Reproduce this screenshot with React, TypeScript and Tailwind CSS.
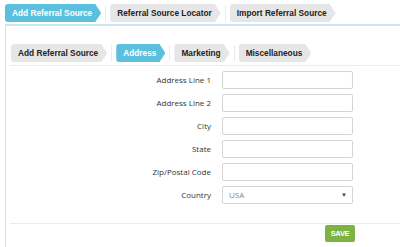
import React from "react";

type Tab = { label: string; active?: boolean };

const topTabs: Tab[] = [
  { label: "Add Referral Source", active: true },
  { label: "Referral Source Locator" },
  { label: "Import Referral Source" },
];

const subTabs: Tab[] = [
  { label: "Add Referral Source" },
  { label: "Address", active: true },
  { label: "Marketing" },
  { label: "Miscellaneous" },
];

const fields = ["Address Line 1", "Address Line 2", "City", "State", "Zip/Postal Code"];

function ArrowTab({ tab }: { tab: Tab }) {
  return (
    <div
      className={
        "h-[18px] flex items-center pl-[7px] pr-[9px] rounded-l-[3px] text-[8.3px] font-bold whitespace-nowrap [clip-path:polygon(0_0,calc(100%-6px)_0,100%_50%,calc(100%-6px)_100%,0_100%)] " +
        (tab.active ? "bg-[#5bc0de] text-white" : "bg-[#e6e6e6] text-[#222]")
      }
      style={{ fontFamily: '"Liberation Sans", Arial, sans-serif' }}
    >
      {tab.label}
    </div>
  );
}

function TabRow({ tabs }: { tabs: Tab[] }) {
  return (
    <div className="flex items-center">
      {tabs.map((t, i) => (
        <React.Fragment key={t.label}>
          {i > 0 && <div className="w-[1px] h-[16px] mx-[4px] bg-[#ececec]" />}
          <ArrowTab tab={t} />
        </React.Fragment>
      ))}
    </div>
  );
}

export default function App() {
  return (
    <div
      className="w-[400px] h-[247px] bg-white overflow-hidden flex flex-col"
      style={{ fontFamily: '"Open Sans", sans-serif' }}
    >
      <div className="pl-[5px] pt-[4px]">
        <TabRow tabs={topTabs} />
      </div>

      <div className="ml-[5px] mt-[2px] flex-1 border-l border-t-2 border-[#c8e8f2]">
        <div className="pl-[5px] pt-[18px]">
          <TabRow tabs={subTabs} />
        </div>
        <div className="ml-[4px] mt-[3px] border-b border-[#ececec]" />

        <div className="flex flex-col gap-[5px] mt-[5px]">
          {fields.map((f) => (
            <div key={f} className="flex items-center">
              <label className="w-[205px] text-right text-[8px] text-[#333]">{f}</label>
              <input className="ml-[11px] w-[131px] h-[18px] border border-[#d4d4d4] rounded-[2px] outline-none" />
            </div>
          ))}
          <div className="flex items-center">
            <label className="w-[205px] text-right text-[8px] text-[#333]">Country</label>
            <div className="ml-[11px] w-[131px] h-[18px] border border-[#d4d4d4] rounded-[2px] flex items-center justify-between pl-[6px] pr-[5px]">
              <span className="text-[8px] text-[#888]">USA</span>
              <span className="text-[6px] text-[#444]">▼</span>
            </div>
          </div>
        </div>

        <div className="ml-[4px] mt-[19px] border-b border-[#ececec]" />
        <div className="flex justify-end pr-[45px] mt-[1px]">
          <button
            className="w-[30px] h-[17px] bg-[#7cb342] rounded-[2px] text-white text-[7.5px] font-bold tracking-[-0.3px]"
            style={{ fontFamily: '"Liberation Sans", Arial, sans-serif' }}
          >
            SAVE
          </button>
        </div>
      </div>
    </div>
  );
}
